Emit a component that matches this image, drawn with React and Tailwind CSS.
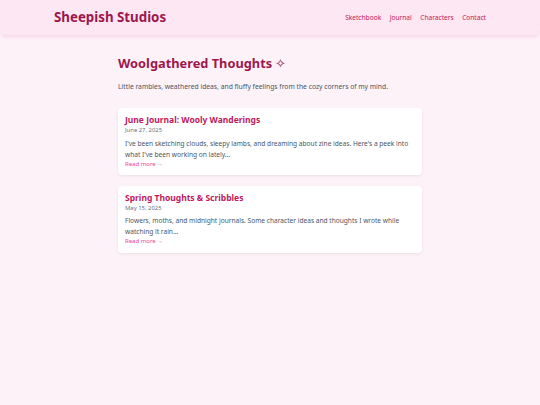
export default function App() {
  const posts = [
    {
      title: "June Journal: Wooly Wanderings",
      date: "June 27, 2025",
      body: "I've been sketching clouds, sleepy lambs, and dreaming about zine ideas. Here's a peek into what I've been working on lately...",
    },
    {
      title: "Spring Thoughts & Scribbles",
      date: "May 15, 2025",
      body: "Flowers, moths, and midnight journals. Some character ideas and thoughts I wrote while watching it rain...",
    },
  ];

  return (
    <div
      className="min-h-[405px] bg-[#fdf2f8]"
      style={{ fontFamily: '"Noto Sans", sans-serif' }}
    >
      <header className="bg-[#fce7f3] rounded-b-[6px] shadow-[0_2px_4px_rgba(190,24,93,0.12)]">
        <div className="mx-[54px] h-[35px] flex items-center justify-between">
          <h1 className="text-[13.3px] font-bold text-[#9d174d] leading-none">Sheepish Studios</h1>
          <nav className="flex gap-[8.5px] text-[6.6px] text-[#be185d]">
            <a>Sketchbook</a>
            <a>Journal</a>
            <a>Characters</a>
            <a>Contact</a>
          </nav>
        </div>
      </header>

      <main className="w-[304px] mx-auto pt-[18px]">
        <h2 className="text-[12.8px] font-bold text-[#9d174d] leading-[20px]">
          Woolgathered Thoughts <span className="font-normal">✧</span>
        </h2>
        <p className="mt-[7.5px] text-[6.75px] text-[#4b5563] leading-[11px]">
          Little rambles, weathered ideas, and fluffy feelings from the cozy corners of my mind.
        </p>

        <div className="mt-[16.5px] flex flex-col gap-[10.5px]">
          {posts.map((p) => (
            <article
              key={p.title}
              className="bg-white rounded-[4px] shadow-[0_1px_3px_rgba(0,0,0,0.08)] px-[7px] pt-[6px] pb-[7.5px]"
            >
              <h3 className="text-[8.5px] font-bold text-[#be185d] leading-[12px]">{p.title}</h3>
              <p className="text-[5.9px] text-[#6b7280] leading-[8px]">{p.date}</p>
              <p className="mt-[3.5px] text-[6.6px] text-[#4b5563] leading-[11px]">{p.body}</p>
              <a className="block text-[6px] text-[#ec4899] leading-[8px]">Read more →</a>
            </article>
          ))}
        </div>
      </main>
    </div>
  );
}
